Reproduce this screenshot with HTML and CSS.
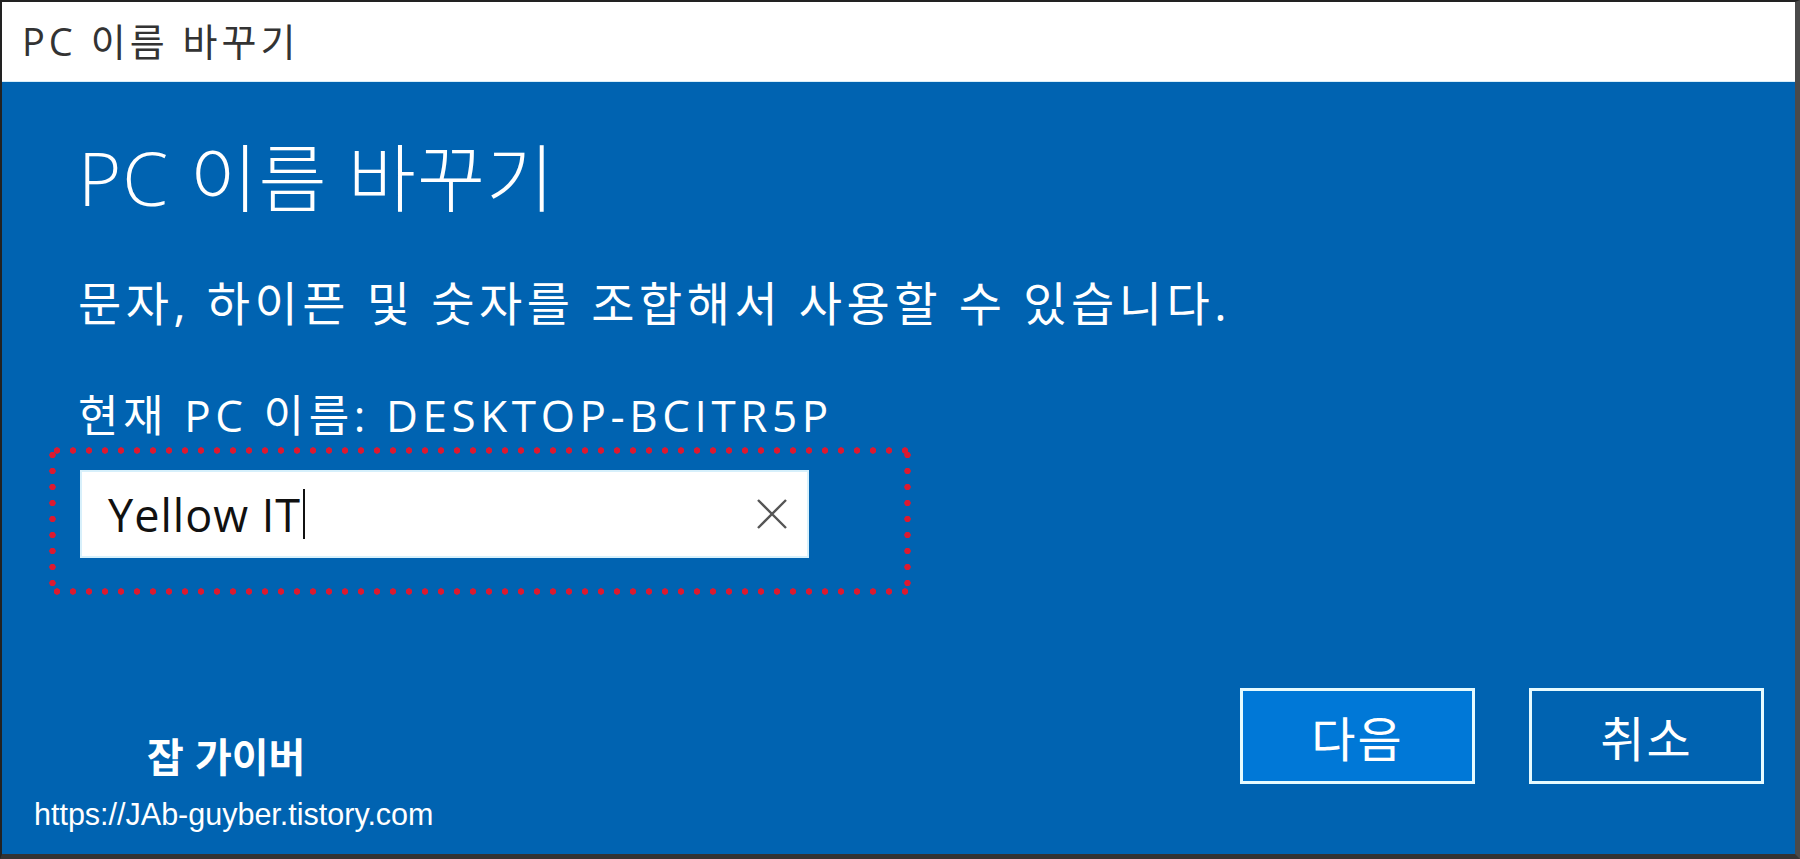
FILE: index.html
```html
<!DOCTYPE html>
<html lang="ko">
<head>
    <meta charset="UTF-8">
    <meta name="viewport" content="width=device-width, initial-scale=1.0">
    <title>PC 이름 바꾸기</title>
    <link rel="stylesheet" href="styles.css">
</head>
<body>

<div class="window">
    <div class="titlebar">PC 이름 바꾸기</div>

    <div class="dialog">
        <h1>PC 이름 바꾸기</h1>
        <p class="desc">문자, 하이픈 및 숫자를 조합해서 사용할 수 있습니다.</p>
        <p class="current">현재 PC 이름: DESKTOP-BCITR5P</p>

        <div class="field-wrap">
            <div class="field">
                <span class="field-text">Yellow IT</span><span class="caret"></span>
                <svg class="clear" width="34" height="34" viewBox="0 0 34 34">
                    <path d="M3 3 L31 31 M31 3 L3 31" stroke="#555" stroke-width="2.4" fill="none"/>
                </svg>
            </div>
        </div>

        <div class="footer">
            <div class="watermark">
                <div class="wm-name">잡 가이버</div>
                <div class="wm-url">https://JAb-guyber.tistory.com</div>
            </div>
            <div class="buttons">
                <button class="btn btn-primary">다음</button>
                <button class="btn">취소</button>
            </div>
        </div>
    </div>
</div>

</body>
</html>
```

FILE: styles.css
```css
html, body {
    margin: 0;
    height: 100%;
    background: #1a1a1a;
}
body {
    font-family: "Open Sans", "Noto Sans CJK KR", sans-serif;
}
.window {
    box-sizing: border-box;
    height: 859px;
    border-top: 2px solid #222;
    border-left: 2px solid #222;
    border-right: 5px solid #4a4a4a;
    border-bottom: 5px solid #333;
    display: flex;
    flex-direction: column;
}
.titlebar {
    height: 80px;
    background: #fff;
    border-bottom: 1px solid #d8eef8;
    box-sizing: border-box;
    padding-left: 20px;
    font-size: 38px;
    letter-spacing: 4px;
    line-height: 78px;
    color: #333;
}
.dialog {
    flex: 1;
    background: #0063b1;
    color: #fff;
    padding-left: 76px;
    display: flex;
    flex-direction: column;
}
h1 {
    margin: 56px 0 0 0;
    font-size: 74px;
    font-weight: 300;
    letter-spacing: 1px;
    line-height: 80px;
}
.desc {
    margin: 57px 0 0 0;
    font-size: 47px;
    letter-spacing: 4.5px;
    line-height: 56px;
    font-weight: 400;
}
.current {
    margin: 58px 0 0 0;
    font-size: 44px;
    letter-spacing: 4.6px;
    line-height: 52px;
}
/* red dotted highlight drawn with repeated dots */
.field-wrap {
    margin: 6px 0 0 -29px;
    width: 862px;
    height: 148px;
    box-sizing: border-box;
    padding: 23px 0 0 31px;
    background:
        radial-gradient(circle, #dc1a30 2.9px, transparent 3.5px) left top / 16px 7px repeat-x,
        radial-gradient(circle, #dc1a30 2.9px, transparent 3.5px) left bottom / 16px 7px repeat-x,
        radial-gradient(circle, #dc1a30 2.9px, transparent 3.5px) left top / 7px 16px repeat-y,
        radial-gradient(circle, #dc1a30 2.9px, transparent 3.5px) right top / 7px 16px repeat-y;
}
.field {
    width: 729px;
    height: 88px;
    box-sizing: border-box;
    background: #fff;
    border: 2px solid #d7f0fb;
    display: flex;
    align-items: center;
    padding-left: 26px;
    padding-right: 18px;
    color: #111;
    font-size: 45px;
    letter-spacing: 1px;
}
.caret {
    width: 2px;
    height: 50px;
    background: #111;
    margin-left: 2px;
}
.clear {
    margin-left: auto;
}
.footer {
    flex: 1;
    display: flex;
    justify-content: space-between;
    align-items: flex-start;
    padding-right: 31px;
}
.watermark {
    margin: 140px 0 0 -44px;
    font-family: "Liberation Sans", "Noto Sans CJK KR", sans-serif;
}
.wm-name {
    margin-left: 113px;
    font-size: 40px;
    font-weight: bold;
    line-height: 46px;
}
.wm-url {
    margin-top: 16px;
    font-size: 30.5px;
    line-height: 34px;
}
.buttons {
    margin-top: 93px;
    display: flex;
    gap: 54px;
}
.btn {
    width: 235px;
    height: 96px;
    background: #0063b1;
    border: 3px solid #e6fbff;
    color: #fff;
    font-family: "Open Sans", "Noto Sans CJK KR", sans-serif;
    font-size: 48px;
    letter-spacing: 2px;
    padding: 0;
}
.btn-primary {
    background: #0078d7;
}
```
